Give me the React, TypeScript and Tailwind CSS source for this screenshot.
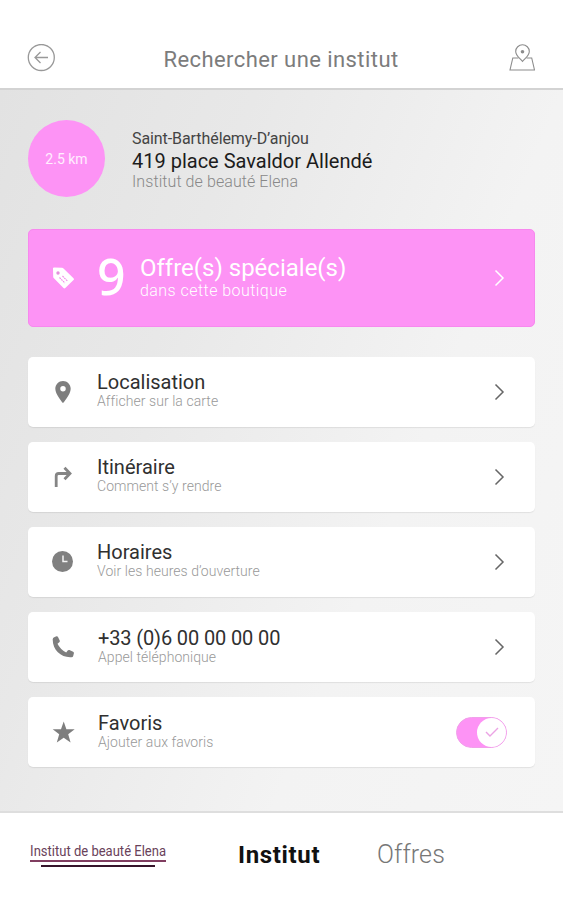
import { useState } from 'react';
import type { ReactNode } from 'react';
import clsx from 'clsx';

interface RowProps {
  icon: ReactNode;
  title: string;
  subtitle: string;
  titleClass?: string;
  textClass?: string;
  onClick?: () => void;
  children?: ReactNode;
}

function Chevron({ className }: { className?: string }) {
  return (
    <svg viewBox="0 0 12 18" className={clsx('w-3 h-[18px] shrink-0', className)} fill="none" stroke="currentColor" strokeWidth="1.5">
      <path d="M1.500 1.500 9 9l-7.500 7.500" />
    </svg>
  );
}

function BackIcon() {
  return (
    <svg viewBox="0 0 28 28" className="w-7 h-7" fill="none" stroke="#999" strokeWidth="1.3">
      <circle cx="14.300" cy="13.500" r="13" />
      <path d="M21 13.500H8M13.500 8 8 13.500l5.500 5.500" />
    </svg>
  );
}

function MapIcon() {
  return (
    <svg viewBox="0 0 26 28" className="w-[26px] h-7" fill="none" stroke="#8c8c8c" strokeWidth="1.1">
      <path d="M13.500 17.500C11 14.500 6.700 11.500 6.700 7.400a6.800 6.600 0 0 1 13.600 0c0 4.100-4.300 7.100-6.800 10.100Z" />
      <circle cx="13.500" cy="7.800" r="1.800" fill="#8c8c8c" stroke="none" />
      <path d="M9.500 14H3.800L1 26h24.500l-2.800-12h-5.200" />
    </svg>
  );
}

function TagIcon() {
  return (
    <svg viewBox="0 0 22 22" className="w-[22px] h-[22px]" fill="#fff">
      <path d="M1 1.500Q.9.300 2.200.400l7.800.300q.9 0 1.500.700l10 9.900q.900.900 0 1.800l-8.200 8q-.900.900-1.800 0l-9.800-10q-.500-.600-.5-1.300Z" />
      <circle cx="6" cy="6" r="1.700" fill="#e58fde" />
      <path d="m7.500 10.500 5.500 5.500M10.500 9l5.300 5.300" stroke="#f08be8" strokeWidth="1.100" strokeDasharray="1.800 .7" />
    </svg>
  );
}

function PinIcon() {
  return (
    <svg viewBox="5 2 14 20" className="w-4 h-[22px]" fill="#7e7e7e">
      <path d="M12 2C8.130 2 5 5.130 5 9c0 5.250 7 13 7 13s7-7.750 7-13c0-3.870-3.130-7-7-7zm0 9.500a2.500 2.500 0 0 1 0-5 2.500 2.500 0 0 1 0 5z" />
    </svg>
  );
}

function RouteIcon() {
  return (
    <svg viewBox="0 0 18 22" className="w-[18px] h-[22px]" fill="none" stroke="#858585" strokeWidth="2.800">
      <path d="M2.200 21V10q0-2.500 2.500-2.500H15.500M10.500 1.700l5.500 5.800-5.500 5.800" />
    </svg>
  );
}

function ClockIcon() {
  return (
    <svg viewBox="0 0 22 22" className="w-[22px] h-[22px]">
      <circle cx="10.500" cy="10.500" r="10.500" fill="#808080" />
      <path d="M11 4.500v6h4.500" fill="none" stroke="#f4f4f4" strokeWidth="1.500" />
    </svg>
  );
}

function PhoneIcon() {
  return (
    <svg viewBox="0 0 22 22" className="w-[22px] h-[22px]" fill="#7e7e7e">
      <path d="M2.200 1.200 4.500.300q1-.300 1.500.700l1.700 3.600q.400 1-.400 1.700L5.500 7.700q2.700 5.600 8.700 8.800l1.500-2q.7-.8 1.700-.4l3.700 1.600q1 .500.800 1.500l-.7 2.700q-.300 1.200-1.700 1.300C9.500 22 .500 14.500.700 3.200q.1-1.500 1.500-2Z" />
    </svg>
  );
}

function StarIcon() {
  return (
    <svg viewBox="0 0 24 23" className="w-6 h-[23px]" fill="#7e7e7e">
      <path d="m12.700.500 2.700 7.800h8.300l-6.500 5 2.400 8.200-6.900-4.800-6.900 4.800 2.400-8.200-6.500-5H10Z" />
    </svg>
  );
}

function Row({ icon, title, subtitle, titleClass, textClass, onClick, children }: RowProps) {
  return (
    <div
      onClick={onClick}
      className="flex h-[70px] items-center rounded-[5px] bg-white pr-[29px] shadow-[0_1px_1px_rgba(0,0,0,0.08)] cursor-pointer"
    >
      <div className="flex w-[69px] shrink-0 justify-center">{icon}</div>
      <div className={clsx('flex-1 whitespace-nowrap', textClass || 'pb-[7px]')}>
        <div className={clsx('text-[20px] leading-6 text-[#303030]', titleClass)}>{title}</div>
        <div className="text-[14px] leading-[14px] font-light tracking-[0.06px] text-[#999]">{subtitle}</div>
      </div>
      {children || <Chevron className="mb-px text-[#666]" />}
    </div>
  );
}

export default function App() {
  const [favorite, setFavorite] = useState(true);
  const [tab, setTab] = useState<'institut' | 'offres'>('institut');

  return (
    <div className="flex h-[900px] w-[563px] flex-col overflow-hidden bg-white font-[Roboto,sans-serif]">
      <header className="flex h-[90px] shrink-0 items-center justify-between border-b-2 border-[#d3d3d3] pt-[27px] pr-7 pb-0 pl-[27px]">
        <button><BackIcon /></button>
        <h1 className="pt-[5px] pr-[2px] text-[22px] leading-7 tracking-[0.430px] text-[#7c7c7c]">Rechercher une institut</h1>
        <button><MapIcon /></button>
      </header>

      <main className="flex h-[721px] shrink-0 flex-col bg-[linear-gradient(112deg,#e2e2e2_0%,#e8e8e8_30%,#f3f3f3_66%,#f5f5f5_100%)] px-7 pt-[30px]">
        <section className="flex h-[77px] shrink-0 items-center">
          <div className="flex size-[77px] shrink-0 items-center justify-center rounded-full bg-[#fd93f5] pt-px text-[14px] text-white/85">2.5 km</div>
          <div className="ml-[27px] pt-[2px] whitespace-nowrap">
            <div className="text-[16px] leading-[21px] tracking-[-0.080px] text-[#444]">Saint-Barthélemy-D’anjou</div>
            <div className="text-[20px] leading-6 text-[#1c1c1c]">419 place Savaldor Allendé</div>
            <div className="text-[16px] leading-[18px] font-light tracking-[0.080px] text-[#888]">Institut de beauté Elena</div>
          </div>
        </section>

        <section className="mt-8 flex h-[98px] shrink-0 items-center rounded-[5px] border border-[#f788ee] bg-[#fd93f5] pr-7 text-white">
          <div className="flex w-[68px] justify-center"><TagIcon /></div>
          <div className="w-[43px] pb-1 font-['Noto_Sans',sans-serif] text-[50px] leading-[60px] font-medium">9</div>
          <div className="flex-1 pb-[2px] whitespace-nowrap">
            <div className="text-[24px] leading-7">Offre(s) spéciale(s)</div>
            <div className="text-[16px] leading-[18px] font-light tracking-[0.450px]">dans cette boutique</div>
          </div>
          <Chevron />
        </section>

        <section className="mt-[30px] flex flex-col gap-[15px]">
          <Row icon={<PinIcon />} title="Localisation" subtitle="Afficher sur la carte" />
          <Row icon={<RouteIcon />} title="Itinéraire" subtitle="Comment s’y rendre" />
          <Row icon={<ClockIcon />} title="Horaires" subtitle="Voir les heures d’ouverture" />
          <Row icon={<PhoneIcon />} title="+33 (0)6 00 00 00 00" subtitle="Appel téléphonique" titleClass="tracking-[-0.130px]" textClass="pl-px pb-[5px]" />
          <Row icon={<StarIcon />} title="Favoris" subtitle="Ajouter aux favoris" textClass="pl-px pb-[5px]" onClick={() => setFavorite(f => !f)}>
            <div className={clsx('-mr-px flex h-[31px] w-[51px] items-center rounded-full border', favorite ? 'justify-end border-[#f1a0ea] bg-[#fd93f5]' : 'border-[#ccc] bg-[#ccc]')}>
              <div className="flex size-[29px] items-center justify-center rounded-full bg-white">
                <svg viewBox="0 0 14 10" className="w-3.5 h-2.5" fill="none" stroke="#eba3e4" strokeWidth="1.400">
                  <path d="m1 5 4 4 8-8" />
                </svg>
              </div>
            </div>
          </Row>
        </section>
      </main>

      <footer className="flex h-[89px] items-center border-t-2 border-[#dedede] pb-[4px] pl-[30px] whitespace-nowrap">
        <div className="flex w-[136px] flex-col items-center">
          <div className="origin-center scale-x-[0.93] text-[14px] leading-[18px] text-[#69425a]">Institut de beauté Elena</div>
          <div className="h-[2px] w-full bg-[#803d60]" />
          <div className="mt-[3px] h-[2px] w-[114px] bg-[#35142a]" />
        </div>
        <button onClick={() => setTab('institut')} className={clsx('ml-[72px] w-[139px] text-left text-[24px] leading-7', tab === 'institut' ? 'font-bold tracking-[0.650px] text-[#111]' : 'font-light text-[#777]')}>Institut</button>
        <button onClick={() => setTab('offres')} className={clsx('text-[25px] leading-7', tab === 'offres' ? 'font-bold text-[#111]' : 'font-light tracking-[0.100px] text-[#777]')}>Offres</button>
      </footer>
    </div>
  );
}
